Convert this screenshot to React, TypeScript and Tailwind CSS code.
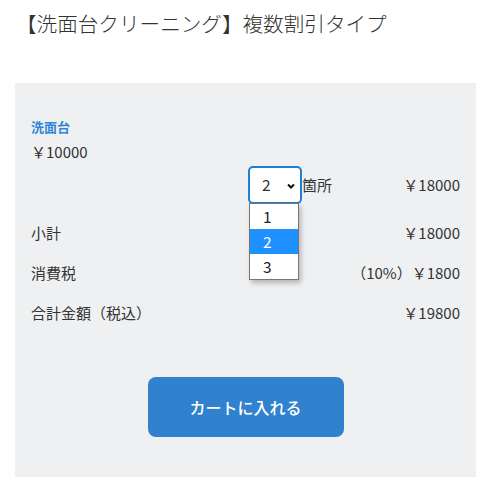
import { useState } from "react";

const OPTIONS = [1, 2, 3];

export default function App() {
  const [qty] = useState(2);

  return (
    <div className="min-h-screen bg-white text-[#333] [font-family:'Noto_Sans_CJK_JP','Noto_Sans',sans-serif]">
      <h1 className="px-[16px] pt-[8px] text-[20.6px] leading-[30px] font-light text-[#333]">
        【洗面台クリーニング】複数割引タイプ
      </h1>

      <div className="ml-[15px] mr-[10px] mt-[45px] bg-[#eff0f2] px-[16px] pt-[34px] pb-[40px]">
        <div className="text-[13px] leading-[20px] font-bold text-[#2f86d6]">洗面台</div>
        <div className="mt-[5px] text-[15px] leading-[20px]">￥10000</div>

        <div className="mt-[3px] flex items-center h-[40px]">
          <div className="ml-[217px] relative">
            <div className="flex items-center justify-between w-[54px] h-[38px] rounded-[5px] border-2 border-[#1a80d8] bg-white pl-[12px] pr-[4px] text-[15.5px]">
              <span>{qty}</span>
              <svg width="10" height="10" viewBox="0 0 10 10" className="mt-[1px]">
                <path d="M2 3.5 L5 6.5 L8 3.5" fill="none" stroke="#111" strokeWidth="2" />
              </svg>
            </div>
            <div className="absolute left-[1px] top-[37px] w-[50px] border border-[#767676] bg-white shadow-[2px_3px_5px_rgba(0,0,0,0.25)] z-10">
              {OPTIONS.map((o) => (
                <div
                  key={o}
                  className={
                    o === qty
                      ? "h-[25px] pl-[13px] text-[15.5px] leading-[25px] bg-[#1e90ff] text-white"
                      : "h-[25px] pl-[13px] text-[15.5px] leading-[25px] text-[#222]"
                  }
                >
                  {o}
                </div>
              ))}
            </div>
          </div>
          <span className="text-[15px]">箇所</span>
          <span className="ml-auto text-[15px]">￥18000</span>
        </div>

        <div className="mt-[8px] flex items-center justify-between h-[40px] text-[15px]">
          <span>小計</span>
          <span>￥18000</span>
        </div>
        <div className="flex items-center justify-between h-[40px] text-[15px]">
          <span>消費税</span>
          <span>（10%）￥1800</span>
        </div>
        <div className="flex items-center justify-between h-[40px] text-[15px]">
          <span>合計金額（税込）</span>
          <span>￥19800</span>
        </div>

        <div className="mt-[44px] flex justify-center">
          <button className="w-[196px] h-[60px] rounded-[8px] bg-[#3182ce] text-white text-[16px] font-medium">
            カートに入れる
          </button>
        </div>
      </div>
    </div>
  );
}
